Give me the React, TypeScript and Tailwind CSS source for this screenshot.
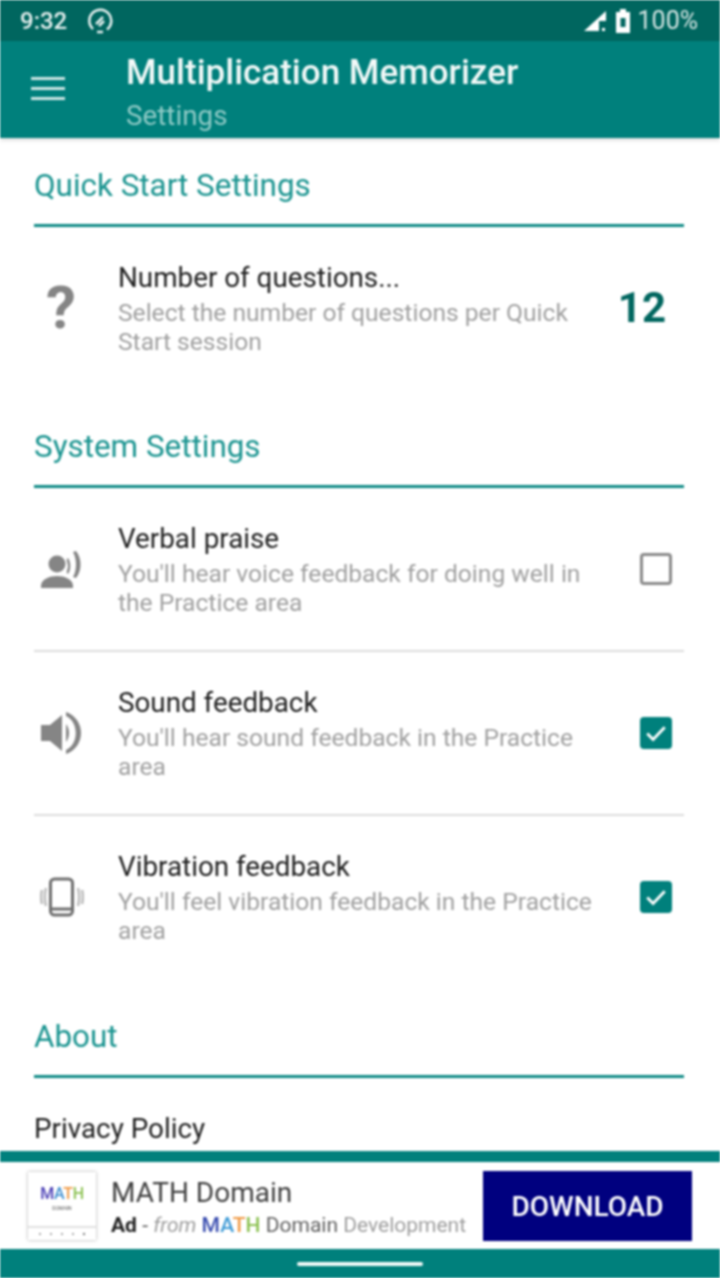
const SectionTitle = ({ title }: { title: string }) => (
  <div className="h-[69px] border-b-[3px] border-[#0f8a86] pt-[12px]">
    <h2 className="text-[31.4px] leading-[31px] text-[#1a9490]">{title}</h2>
  </div>
);

const Checkbox = ({ checked }: { checked: boolean }) =>
  checked ? (
    <div className="w-[32px] h-[32px] rounded-[4px] bg-[#00807c] flex items-center justify-center">
      <svg viewBox="0 0 24 24" className="w-[28px] h-[28px]" fill="none" stroke="#fff" strokeWidth="2.4">
        <path d="M4.5 12.5l5 5L19.5 7" />
      </svg>
    </div>
  ) : (
    <div className="w-[32px] h-[32px] rounded-[4px] border-[3px] border-[#8a8a8a]" />
  );

const VoiceIcon = () => (
  <svg viewBox="0 0 44 40" className="w-[44px] h-[40px]" fill="#858585">
    <circle cx="17" cy="15" r="8.500" />
    <path d="M1 37c0-7 9-10 16-10s16 3 16 10v2H1z" />
    <path d="M28 9c3 4 3 12 0 16l-1-1c-1-1 1-4 1-7s-2-6-1-7z" />
    <path d="M36 2c6 7 6 20 0 27l-3-1c4-7 4-18 0-25z" />
  </svg>
);

const SpeakerIcon = () => (
  <svg viewBox="0 0 44 42" className="w-[44px] h-[42px]" fill="#858585">
    <path d="M1 13h9L22 3v36L10 29H1z" />
    <path d="M26 12c4 5 4 13 0 18z" />
    <path d="M26 0c20 7 20 35 0 42v-4c13-6 13-28 0-34z" />
  </svg>
);

const PhoneIcon = () => (
  <svg viewBox="0 0 44 40" className="w-[44px] h-[40px]" fill="none" stroke="#6e6e6e">
    <rect x="10.500" y="2" width="22" height="36" rx="4" strokeWidth="3" />
    <path d="M11 32h21" strokeWidth="3" />
    <path d="M6 11c-1.500 6-1.500 12 0 18M2 13c-1 4-1 10 0 14M38 11c1.500 6 1.500 12 0 18M42 13c1 4 1 10 0 14" strokeWidth="2.500" stroke="#bdbdbd" />
  </svg>
);

const SettingRow = ({
  icon,
  title,
  desc,
  right,
  divider,
}: {
  icon: React.ReactNode;
  title: string;
  desc: string;
  right: React.ReactNode;
  divider?: boolean;
}) => (
  <div className={`h-[164px] flex items-start pt-[34px] ${divider ? "border-b-2 border-[#dcdcdc]" : ""}`}>
    <div className="w-[84px] h-[94px] flex items-center pl-[6px] shrink-0">{icon}</div>
    <div className="flex-1 min-w-0">
      <div className="text-[27.8px] leading-[34px] text-[#212121]">{title}</div>
      <div className="text-[24.6px] leading-[28.5px] text-[#a0a0a0] mt-[4px]">{desc}</div>
    </div>
    <div className="w-[75px] h-[94px] flex items-center justify-end pr-[12px] shrink-0">{right}</div>
  </div>
);

export default function App() {
  return (
    <div className="w-[720px] h-[1278px] flex flex-col bg-white overflow-hidden blur-[0.8px] font-['Roboto',sans-serif]">
      <div className="h-[41px] bg-[#00665f] flex items-center justify-between pl-[20px] pr-[22px] text-white shrink-0">
        <div className="flex items-center gap-[20px]">
          <span className="text-[24px] leading-none font-medium text-[#e6f0ef]">9:32</span>
          <svg viewBox="0 0 26 26" className="w-[26px] h-[26px]" fill="none" stroke="#e6f0ef">
            <path d="M6 21A11 11 0 1 1 20 21.500M10 24h6" strokeWidth="2.500" />
            <path d="M9 16l7-7M12 18l5-5" strokeWidth="2.500" />
          </svg>
        </div>
        <div className="flex items-center">
          <svg viewBox="0 0 24 22" className="w-[24px] h-[22px] mr-[8px]" fill="#fff">
            <path d="M1 21L23 1v10h-7v10z" />
            <rect x="19" y="18" width="3" height="3" />
          </svg>
          <svg viewBox="0 0 16 26" className="w-[16px] h-[26px] mr-[7px]" fill="#fff">
            <path d="M5 1h6v3h4v21H1V4h4z" />
            <rect x="5.500" y="10" width="5" height="9" fill="#00665f" />
          </svg>
          <span className="text-[25px] leading-none text-[#d5e6e4]">100%</span>
        </div>
      </div>

      <div className="h-[97px] bg-[#00807c] flex shrink-0 shadow-[0_2px_4px_rgba(0,0,0,0.15)] z-10">
        <div className="w-[126px] flex items-center pl-[31px] pb-[2px]">
          <div className="w-[34px] flex flex-col gap-[7px]">
            <div className="h-[3px] bg-[#cfe6e5]" />
            <div className="h-[3px] bg-[#cfe6e5]" />
            <div className="h-[3px] bg-[#cfe6e5]" />
          </div>
        </div>
        <div className="pt-[12px]">
          <div className="text-[35px] leading-[40px] font-medium text-[#f2f9f8]">Multiplication Memorizer</div>
          <div className="text-[27.8px] leading-[32px] mt-[7px] text-[#8fcac6]">Settings</div>
        </div>
      </div>

      <div className="flex-1 min-h-0 overflow-hidden pl-[34px] pr-[36px] pt-[20px]">
        <SectionTitle title="Quick Start Settings" />
        <SettingRow
          icon={<span className="text-[60px] leading-none font-bold text-[#858585] pl-[6px]">?</span>}
          title="Number of questions..."
          desc="Select the number of questions per Quick Start session"
          right={<span className="text-[42px] leading-none font-bold text-[#00665f] pr-[6px]">12</span>}
        />
        <div className="mt-[28px]">
          <SectionTitle title="System Settings" />
          <SettingRow icon={<VoiceIcon />} title="Verbal praise" desc="You'll hear voice feedback for doing well in the Practice area" right={<Checkbox checked={false} />} divider />
          <SettingRow icon={<SpeakerIcon />} title="Sound feedback" desc="You'll hear sound feedback in the Practice area" right={<Checkbox checked />} divider />
          <SettingRow icon={<PhoneIcon />} title="Vibration feedback" desc="You'll feel vibration feedback in the Practice area" right={<Checkbox checked />} />
        </div>
        <div className="mt-[29px]">
          <SectionTitle title="About" />
          <div className="text-[27.8px] leading-[34px] text-[#212121] pt-[34px]">Privacy Policy</div>
        </div>
      </div>

      <div className="h-[11px] bg-[#00807c] shrink-0" />
      <div className="h-[87px] bg-white flex items-center pl-[28px] pr-[28px] shrink-0">
        <div className="w-[68px] h-[68px] shadow-[0_0_3px_rgba(0,0,0,0.35)] flex flex-col shrink-0">
          <div className="flex-1 flex flex-col items-center justify-center">
            <div className="text-[16px] leading-none font-medium tracking-tight">
              <span className="text-[#4a3fb5]">M</span>
              <span className="text-[#3f8fd0]">A</span>
              <span className="text-[#f09a45]">T</span>
              <span className="text-[#8cc152]">H</span>
            </div>
            <div className="text-[5px] leading-none mt-[4px] text-[#555555]">DOMAIN</div>
          </div>
          <div className="h-[14px] border-t-2 border-[#e0e0e0] flex items-center justify-around px-[6px]">
            <div className="w-[2px] h-[2px] bg-[#aaaaaa]" />
            <div className="w-[2px] h-[2px] bg-[#aaaaaa]" />
            <div className="w-[2px] h-[2px] bg-[#aaaaaa]" />
            <div className="w-[2px] h-[2px] bg-[#aaaaaa]" />
            <div className="w-[2px] h-[2px] bg-[#777777]" />
          </div>
        </div>
        <div className="ml-[15px] flex-1 min-w-0 pt-[3px]">
          <div className="text-[28px] leading-[32px] text-[#424242]">MATH Domain</div>
          <div className="text-[21px] leading-[24px] mt-[4px] whitespace-nowrap text-[#9e9e9e]">
            <span className="font-bold text-[#212121]">Ad</span>
            <span className="text-[#555555]"> - </span>
            <span className="italic">from </span>
            <span className="font-medium">
              <span className="text-[#3c4fb0]">M</span>
              <span className="text-[#3f9bd6]">A</span>
              <span className="text-[#f09a45]">T</span>
              <span className="text-[#8cc152]">H</span>
            </span>
            <span className="text-[#616161]"> Domain</span> Development
          </div>
        </div>
        <div className="w-[209px] h-[70px] bg-[#00007f] flex items-center justify-center text-white text-[28px] font-medium shrink-0 pt-[2px]">
          DOWNLOAD
        </div>
      </div>
      <div className="h-[29px] bg-[#00807c] flex items-center justify-center shrink-0">
        <div className="w-[126px] h-[4px] rounded-full bg-[#f2f9f8]" />
      </div>
    </div>
  );
}
